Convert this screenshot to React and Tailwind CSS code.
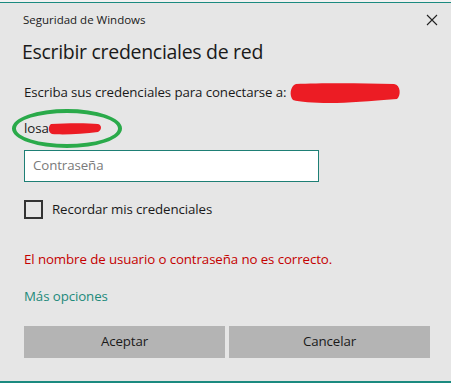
import React from "react";

export default function App() {
  const font = { fontFamily: '"Open Sans", "Noto Sans", sans-serif' };
  return (
    <div
      className="relative w-[451px] h-[383px] flex flex-col bg-[#e6e6e6] text-[#1a1a1a] overflow-hidden"
      style={font}
    >
      <div className="h-[2px] bg-[#f2f2f2]" />
      <div className="h-px bg-[#1b8a80]" />
      <div className="h-[34px] flex items-center justify-between pl-[23px] pr-[13px]">
        <span className="text-[11.5px] leading-none">Seguridad de Windows</span>
        <svg width="12" height="12" viewBox="0 0 12 12">
          <path d="M1 1 L11 11 M11 1 L1 11" stroke="#222" strokeWidth="1.1" />
        </svg>
      </div>
      <div className="pl-[22px] h-[30px] flex items-center text-[19.5px] leading-none tracking-[-0.3px]">
        Escribir credenciales de red
      </div>
      <div className="mt-[16px] pl-[24px] h-[20px] flex items-center text-[13.3px] leading-none tracking-[-0.1px]">
        <span>Escriba sus credenciales para conectarse a:</span>
        <svg width="112" height="20" viewBox="0 0 112 20" className="ml-auto mr-[50px] shrink-0">
          <path
            d="M7 1 C30 0 70 0 105 1 C112 2 112 13 108 16 C80 18 60 20 40 20 C25 20 10 19 4 17 C0 13 1 3 7 1 Z"
            fill="#ec1c24"
          />
        </svg>
      </div>
      <div className="mt-[16px] pl-[24px] h-[20px] flex items-center text-[13.3px] leading-none tracking-[-0.1px]">
        <span>losa</span>
        <svg width="54" height="12" viewBox="0 0 54 12" className="ml-[-1px] shrink-0">
          <path d="M3 1 C20 0 40 0 50 1 C54 2 54 7 50 9 C35 11 15 12 4 11 C0 10 0 3 3 1 Z" fill="#ec1c24" />
        </svg>
      </div>
      <div className="mt-[11px] ml-[24px] w-[295px] h-[32px] bg-white border border-[#1e7f75] flex items-center pl-[8px] text-[13.3px] text-[#7a7a7a] tracking-[-0.1px]">
        Contraseña
      </div>
      <div className="mt-[18px] ml-[24px] h-[19px] flex items-center">
        <div className="w-[19px] h-[19px] border-2 border-[#333333]" />
        <span className="ml-[9px] text-[13.3px] leading-none tracking-[-0.1px]">Recordar mis credenciales</span>
      </div>
      <div className="mt-[31px] pl-[24px] h-[20px] flex items-center text-[13.3px] leading-none tracking-[-0.1px] text-[#c40000]">
        El nombre de usuario o contraseña no es correcto.
      </div>
      <div className="mt-[17px] pl-[24px] h-[20px] flex items-center text-[13.3px] leading-none tracking-[-0.1px] text-[#1d8a7b]">
        Más opciones
      </div>
      <div className="mt-[19px] pl-[24px] flex gap-[4px]">
        <div className="w-[201px] h-[32px] bg-[#b4b4b4] flex items-center justify-center text-[13.3px] tracking-[-0.1px]">
          Aceptar
        </div>
        <div className="w-[201px] h-[32px] bg-[#b4b4b4] flex items-center justify-center text-[13.3px] tracking-[-0.1px]">
          Cancelar
        </div>
      </div>
      <div className="flex-1" />
      <div className="h-[2px] bg-[#1b8a80]" />
      <div className="pointer-events-none absolute left-[12px] top-[109px] w-[110px] h-[39px] rounded-[50%] border-[4px] border-[#2aaa4a]" />
    </div>
  );
}
